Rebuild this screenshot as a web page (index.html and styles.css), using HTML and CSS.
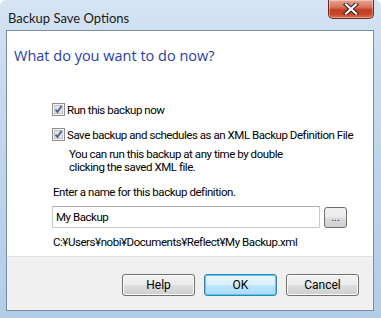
FILE: index.html
```html
<!DOCTYPE html>
<html>
<head>
<meta charset="utf-8">
<link rel="stylesheet" href="styles.css">
</head>
<body>
<div class="window">
  <div class="titlebar">
    <span class="title">Backup Save Options</span>
    <div class="close">
      <svg width="16" height="12" viewBox="0 0 16 12">
        <path d="M3 1.5 L13 10.5 M13 1.5 L3 10.5" stroke="#3a2020" stroke-width="4.2" stroke-linecap="square"/>
        <path d="M3 1.5 L13 10.5 M13 1.5 L3 10.5" stroke="#ffffff" stroke-width="2.2" stroke-linecap="square"/>
      </svg>
    </div>
  </div>
  <div class="client">
    <div class="content">
      <h1 class="heading">What do you want to do now?</h1>
      <div class="options">
        <label class="check">
          <span class="box"><svg width="13" height="13" viewBox="0 0 13 13"><rect x="0.5" y="0.5" width="12" height="12" fill="#f4f4f4" stroke="#8e8f8f"/><rect x="2.5" y="2.5" width="8" height="8" fill="#e4e4e4" stroke="#c4c4c4"/><path d="M3.5 6.5 L5.5 9 L9.5 3" fill="none" stroke="#4a5f97" stroke-width="1.8"/></svg></span>
          <span>Run this backup now</span>
        </label>
        <label class="check">
          <span class="box"><svg width="13" height="13" viewBox="0 0 13 13"><rect x="0.5" y="0.5" width="12" height="12" fill="#f4f4f4" stroke="#8e8f8f"/><rect x="2.5" y="2.5" width="8" height="8" fill="#e4e4e4" stroke="#c4c4c4"/><path d="M3.5 6.5 L5.5 9 L9.5 3" fill="none" stroke="#4a5f97" stroke-width="1.8"/></svg></span>
          <span>Save backup and schedules as an XML Backup Definition File</span>
        </label>
        <p class="desc">You can run this backup at any time by double<br>clicking the saved XML file.</p>
        <p class="prompt">Enter a name for this backup definition.</p>
        <div class="inputrow">
          <div class="input">My Backup</div>
          <div class="browse">...</div>
        </div>
        <p class="path">C:¥Users¥nobi¥Documents¥Reflect¥My Backup.xml</p>
      </div>
    </div>
    <div class="footer">
      <div class="btn">Help</div>
      <div class="btn default">OK</div>
      <div class="btn">Cancel</div>
    </div>
  </div>
</div>
</body>
</html>
```

FILE: styles.css
```css
html, body {
  margin: 0;
  padding: 0;
  background: #ffffff;
}
.window {
  width: 381px;
  height: 318px;
  box-sizing: border-box;
  display: flex;
  flex-direction: column;
  background: linear-gradient(180deg, #d6e4f3 0%, #c9dcf0 20%, #bcd3ec 60%, #b3cde9 100%);
  border-radius: 6px 6px 0 0;
  font-family: Roboto, "Liberation Sans", sans-serif;
  font-size: 11.5px;
  letter-spacing: -0.45px;
  color: #000;
}
.titlebar {
  height: 30px;
  display: flex;
  align-items: flex-start;
  padding-left: 8px;
  padding-right: 7px;
  box-sizing: border-box;
}
.title {
  margin-top: 10px;
  font-family: Lato, "Liberation Sans", sans-serif;
  font-size: 13px;
  letter-spacing: 0;
  color: #1b1b1b;
}
.close {
  margin-left: auto;
  width: 46px;
  height: 19px;
  box-sizing: border-box;
  border: 1px solid #6b2a22;
  border-top: none;
  border-radius: 0 0 5px 5px;
  background: linear-gradient(180deg, #e7a592 0%, #d7735c 40%, #c23e23 55%, #c8462a 80%, #d9725a 100%);
  display: flex;
  align-items: center;
  justify-content: center;
  box-shadow: inset 0 0 0 1px rgba(255,255,255,0.35);
}
.client {
  flex: 1;
  margin: 0 7px 7px 6px;
  border: 1px solid #7b8ba0;
  display: flex;
  flex-direction: column;
  background: #ffffff;
}
.content {
  height: 226px;
  border-bottom: 1px solid #dfdfdf;
  box-sizing: border-box;
  padding: 0 7px;
}
.heading {
  margin: 15px 0 0 0;
  font-family: "Open Sans", "Noto Sans", sans-serif;
  font-weight: normal;
  font-size: 14.5px;
  letter-spacing: 0;
  line-height: 20px;
  color: #2a3da8;
}
.options {
  margin-top: 36px;
  padding-left: 38px;
}
.check {
  display: flex;
  align-items: center;
  height: 15px;
  gap: 2px;
  white-space: nowrap;
}
.check + .check {
  margin-top: 10px;
}
.box {
  width: 13px;
  height: 13px;
  display: flex;
}
.desc {
  margin: 6px 0 0 17px;
  line-height: 13px;
}
.prompt {
  margin: 11px 0 0 1px;
  line-height: 14px;
}
.inputrow {
  display: flex;
  align-items: flex-start;
  gap: 4px;
  margin-top: 7px;
}
.input {
  width: 268px;
  height: 22px;
  box-sizing: border-box;
  border: 1px solid #c5cad2;
  border-top-color: #abadb3;
  padding: 3px 3px;
  line-height: 14px;
}
.browse {
  width: 23px;
  height: 21px;
  margin-top: 1px;
  box-sizing: border-box;
  border: 1px solid #707070;
  border-radius: 3px;
  background: linear-gradient(180deg, #f2f2f2 0%, #ebebeb 48%, #dddddd 52%, #cfcfcf 100%);
  font-size: 11px;
  letter-spacing: 0;
  color: #25255a;
  text-align: center;
  line-height: 20px;
}
.path {
  margin: 7px 0 0 1px;
  line-height: 14px;
}
.footer {
  flex: 1;
  background: #f0f0f0;
  display: flex;
  justify-content: flex-end;
  align-items: flex-start;
  gap: 9px;
  padding: 17px 14px 0 0;
}
.btn {
  width: 73px;
  height: 22px;
  box-sizing: border-box;
  border: 1px solid #707070;
  border-radius: 3px;
  background: linear-gradient(180deg, #f2f2f2 0%, #ebebeb 48%, #dddddd 52%, #cfcfcf 100%);
  box-shadow: inset 0 0 0 1px #fcfcfc;
  text-align: center;
  line-height: 20px;
  font-size: 12px;
  letter-spacing: 0;
}
.btn.default {
  border-color: #3c7fb1;
  background: linear-gradient(180deg, #eaf6fd 0%, #d9f0fc 48%, #bee6fd 52%, #a7d9f5 100%);
  box-shadow: inset 0 0 0 1px #48d1f5;
}
```
